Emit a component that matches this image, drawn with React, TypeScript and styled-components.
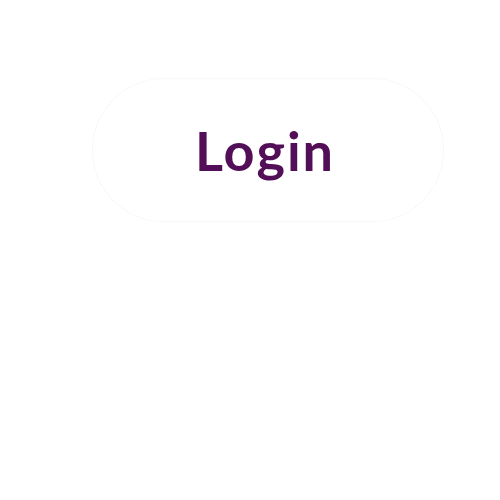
import React from "react"
import styled, { createGlobalStyle } from "styled-components"

const GlobalStyle = createGlobalStyle`
  html, body {
    margin: 0;
    padding: 0;
    background: #ffffff;
  }
`

export default function App() {
  return (
    <Page>
      <GlobalStyle />
      <LoginButton type="button">Login</LoginButton>
    </Page>
  )
}

const Page = styled.div`
  width: 500px;
  height: 500px;
  padding: 78px 0 0 92px;
  box-sizing: border-box;
`
const LoginButton = styled.button`
  display: flex;
  align-items: center;
  justify-content: center;
  width: 352px;
  height: 144px;
  padding: 0 6px 0 0;
  border: 1px dotted #f0f0f0;
  border-radius: 72px;
  background: #ffffff;
  color: #520f57;
  font-family: Lato, "Noto Sans", sans-serif;
  font-weight: 700;
  font-size: 54px;
  letter-spacing: 2px;
  cursor: pointer;
`
